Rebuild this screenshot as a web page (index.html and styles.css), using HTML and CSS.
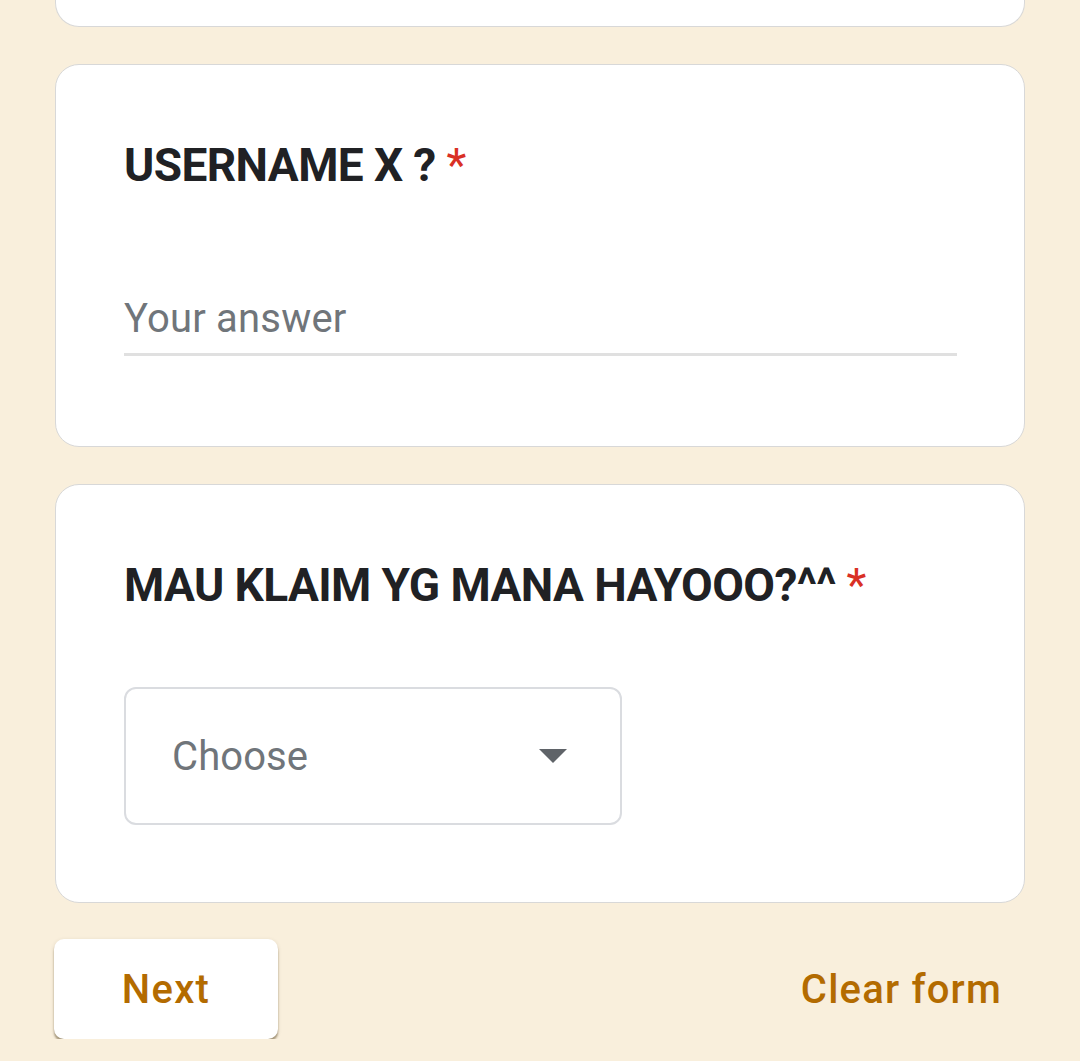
FILE: index.html
```html
<!DOCTYPE html>
<html lang="en">
<head>
<meta charset="utf-8">
<title>Form</title>
<link rel="stylesheet" href="styles.css">
</head>
<body>
<div class="page">
  <div class="card-tail"></div>

  <div class="card">
    <div class="title">USERNAME X ? <span class="req">*</span></div>
    <div class="answer">Your answer</div>
  </div>

  <div class="card card-select">
    <div class="title">MAU KLAIM YG MANA HAYOOO?^^ <span class="req">*</span></div>
    <div class="select">
      <span class="select-text">Choose</span>
      <svg class="arrow" width="28" height="14" viewBox="0 0 28 14"><path d="M0 0 L28 0 L14 14 Z" fill="#5f6368"/></svg>
    </div>
  </div>

  <div class="actions">
    <div class="btn-next">Next</div>
    <div class="btn-clear">Clear form</div>
  </div>
</div>
</body>
</html>
```

FILE: styles.css
```css
html, body {
  margin: 0;
  padding: 0;
  background: #f9efdc;
  font-family: Roboto, "Noto Sans", Arial, sans-serif;
}

.page {
  width: 970px;
  margin-left: 55px;
  display: flex;
  flex-direction: column;
}

.card-tail {
  height: 26px;
  background: #fff;
  border: 1px solid #d8d8d8;
  border-top: none;
  border-radius: 0 0 24px 24px;
}

.card {
  margin-top: 37px;
  background: #fff;
  border: 1px solid #d8d8d8;
  border-radius: 24px;
  padding: 70px 67px 90px 68px;
}

.title {
  font-size: 46px;
  line-height: 60px;
  font-weight: 700;
  color: #202124;
  letter-spacing: -0.6px;
}

.req {
  color: #d93025;
  font-weight: 400;
  letter-spacing: 0;
}

.answer {
  margin-top: 100px;
  font-size: 40px;
  line-height: 48px;
  color: #70757a;
  padding-bottom: 10px;
  border-bottom: 3px solid #e0e0e0;
  letter-spacing: 0.2px;
}

.card-select {
  padding-bottom: 77px;
}

.select {
  margin-top: 72px;
  height: 134px;
  border: 2px solid #dadce0;
  border-radius: 12px;
  display: flex;
  align-items: center;
  justify-content: space-between;
  padding: 0 53px 0 46px;
  box-sizing: content-box;
  width: 395px;
}

.select-text {
  font-size: 40px;
  color: #70757a;
  letter-spacing: 0.1px;
}

.arrow {
  display: block;
}

.actions {
  margin-top: 36px;
  display: flex;
  justify-content: space-between;
  align-items: center;
}

.btn-next {
  margin-left: -1px;
  width: 224px;
  height: 100px;
  background: #fff;
  border-radius: 10px;
  box-shadow: 0 3px 2px rgba(60, 40, 0, 0.4), 0 1px 4px rgba(60, 40, 0, 0.12);
  display: flex;
  align-items: center;
  justify-content: center;
  font-size: 40px;
  font-weight: 500;
  color: #b36b00;
  letter-spacing: 1.3px;
}

.btn-clear {
  margin-right: 23px;
  font-size: 40px;
  font-weight: 500;
  color: #b36b00;
  letter-spacing: 1.2px;
}
```
